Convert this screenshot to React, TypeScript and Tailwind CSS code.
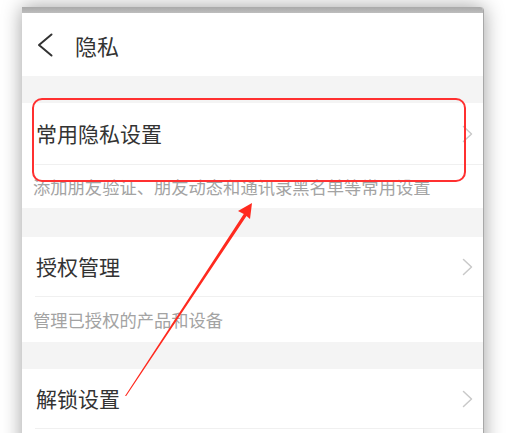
const font = { fontFamily: '"Noto Sans CJK SC", "Noto Sans", sans-serif' };

interface Item {
	title: string;
	desc?: string;
	rowH: string;
	descH: string;
}

function Gap({ h }: { h: string }) {
	return <div className={`${h} bg-[#f4f4f4]`} />;
}

function Arrow() {
	return (
		<svg width="11" height="18" viewBox="0 0 11 18" fill="none">
			<polyline
				points="1.5,1.5 9.5,9 1.5,16.5"
				stroke="#c9c9c9"
				strokeWidth="1.5"
				strokeLinecap="round"
				strokeLinejoin="round"
			/>
		</svg>
	);
}

function SettingRow({ title, desc, rowH, descH }: Item) {
	return (
		<div className="bg-white">
			<div className={`flex ${rowH} items-center border-b border-[#f0f0f0] ml-[13px] pr-[10px]`}>
				<span className="flex-1 pl-[1px] text-[21px] leading-none text-[#333]">
					{title}
				</span>
				<Arrow />
			</div>
			{desc !== undefined && (
				<div className={`flex ${descH} items-center pl-[11px] text-[17.3px] leading-none text-[#a3a3a3]`}>
					{desc}
				</div>
			)}
		</div>
	);
}

export default function App() {
	return (
		<div
			className="relative h-[433px] w-[514px] overflow-hidden bg-white"
			style={font}
		>
			<div className="ml-[22px] mt-[7px] w-[462px] overflow-hidden rounded-tr-[4px] border-r border-[#a8a8a8] bg-white shadow-[0_0_20px_rgba(0,0,0,0.38)]">
				<div className="h-[6px] bg-gradient-to-b from-[#a9a9a9] to-[#bdbdbd]" />
				<div className="flex h-[63px] items-center gap-[22px] pl-[15px]">
					<svg width="16" height="24" viewBox="0 0 16 24" fill="none">
						<polyline
							points="14.5,1.5 2,12 14.5,22.5"
							stroke="#333"
							strokeWidth="2"
							strokeLinecap="round"
							strokeLinejoin="round"
						/>
					</svg>
					<span className="text-[22px] leading-none text-[#333]">隐私</span>
				</div>
				<Gap h="h-[27px]" />
				<SettingRow
					title="常用隐私设置"
					desc="添加朋友验证、朋友动态和通讯录黑名单等常用设置"
					rowH="h-[62px]"
					descH="h-[43px]"
				/>
				<Gap h="h-[29px]" />
				<SettingRow
					title="授权管理"
					desc="管理已授权的产品和设备"
					rowH="h-[60px]"
					descH="h-[45px]"
				/>
				<Gap h="h-[27px]" />
				<SettingRow title="解锁设置" rowH="h-[60px]" descH="h-[45px]" />
				<div className="h-[40px] bg-white" />
			</div>

			{/* annotation overlay */}
			<div className="absolute left-[32px] top-[98px] h-[84px] w-[434px] rounded-[10px] border-2 border-[#ff3030]" />
			<svg
				className="pointer-events-none absolute left-0 top-0"
				width="514"
				height="433"
				viewBox="0 0 514 433"
			>
				<polygon
					points="252,203 238,211 243.8,214 125,396 126.2,396 246.5,216 250,219"
					fill="#ff2a1f"
				/>
			</svg>
		</div>
	);
}
